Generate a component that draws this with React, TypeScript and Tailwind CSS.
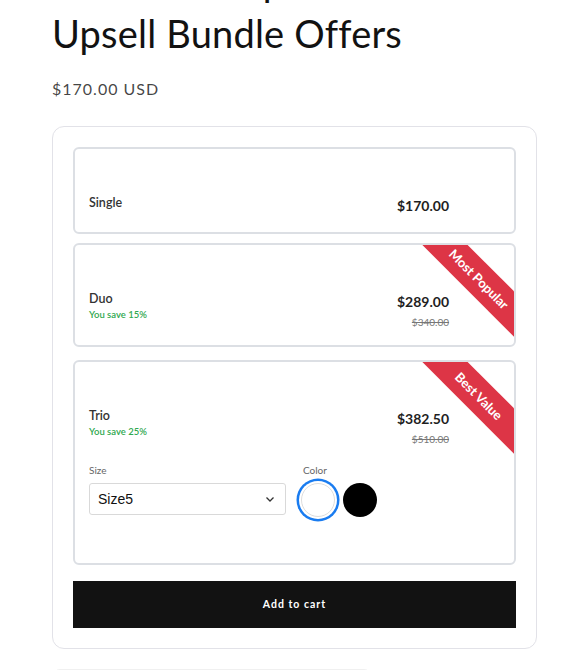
import React from "react";

function Ribbon({ text }: { text: string }) {
  return (
    <div className="pointer-events-none absolute right-[-40px] top-[18px] flex h-[32px] w-[150px] rotate-45 items-center justify-center bg-[#dd3546]">
      <span className="text-[13px] font-bold leading-none text-white">{text}</span>
    </div>
  );
}

function Offer({
  name,
  price,
  save,
  old,
  ribbon,
  className = "",
  children,
}: {
  name: string;
  price: string;
  save?: string;
  old?: string;
  ribbon?: string;
  className?: string;
  children?: React.ReactNode;
}) {
  return (
    <div
      className={`relative overflow-hidden rounded-[6px] border-2 border-[#dcdfe4] bg-white pl-[14px] pr-[65px] pt-[46px] ${className}`}
    >
      {ribbon && <Ribbon text={ribbon} />}
      <div className="flex items-start justify-between">
        <div className="flex flex-col">
          <span className="text-[12.5px] font-semibold leading-[16px] text-[#333]">{name}</span>
          {save && (
            <span className="text-[9.5px] font-semibold leading-[16px] text-[#2fa84f]">{save}</span>
          )}
        </div>
        <div className="flex flex-col items-end">
          <span className="text-[14px] font-bold leading-[22px] text-[#1f1f1f]">{price}</span>
          {old && (
            <span className="text-[10px] leading-[18px] text-[#777] line-through">{old}</span>
          )}
        </div>
      </div>
      {children}
    </div>
  );
}

export default function App() {
  return (
    <div
      className="h-[670px] overflow-hidden bg-white pl-[52px] text-[#121212]"
      style={{ fontFamily: "Lato, 'Noto Sans', sans-serif" }}
    >
      <div className="mt-[-45px] text-[38px] font-normal leading-[52px] tracking-[0.2px]">
        <div>Old Demo Up</div>
        <div>Upsell Bundle Offers</div>
      </div>
      <div className="mt-[20px] text-[16px] leading-[20px] tracking-[1px] text-[#121212]/80">
        $170.00 USD
      </div>
      <div className="mt-[27px] w-[485px] rounded-[12px] border border-[#e2e2e8] px-[20px] pb-[20px] pt-[20px]">
        <Offer name="Single" price="$170.00" className="h-[87px]" />
        <Offer
          name="Duo"
          price="$289.00"
          save="You save 15%"
          old="$340.00"
          ribbon="Most Popular"
          className="mt-[9px] h-[104px]"
        />
        <Offer
          name="Trio"
          price="$382.50"
          save="You save 25%"
          old="$510.00"
          ribbon="Best Value"
          className="mt-[13px] h-[205px]"
        >
          <div className="mt-[16px] flex items-start">
            <div className="flex flex-col">
              <span className="text-[10px] leading-[12px] text-[#666]">Size</span>
              <div
                className="mt-[7px] flex h-[32px] w-[197px] items-center justify-between rounded-[3px] border border-[#d9d9d9] bg-white pl-[8px] pr-[10px] text-[14px] text-[#111]"
                style={{ fontFamily: "'Liberation Sans', Arial, sans-serif" }}
              >
                <span>Size5</span>
                <svg width="10" height="10" viewBox="0 0 10 10" fill="none">
                  <path d="M1.5 3.5L5 7L8.5 3.5" stroke="#333" strokeWidth="1.3" />
                </svg>
              </div>
            </div>
            <div className="ml-[15px] flex flex-col">
              <span className="pl-[2px] text-[10px] leading-[12px] text-[#666]">Color</span>
              <div className="mt-[7px] flex items-center gap-[8px]">
                <div className="h-[34px] w-[34px] rounded-full border border-[#ddd] bg-white shadow-[0_0_0_2px_#fff,0_0_0_4.5px_#1a7cf0]" />
                <div className="h-[34px] w-[34px] rounded-full bg-black" />
              </div>
            </div>
          </div>
        </Offer>
        <button className="mt-[16px] flex h-[47px] w-full items-center justify-center bg-[#121212] text-[10.5px] font-bold tracking-[1px] text-white">
          Add to cart
        </button>
      </div>
      <div className="mt-[20px] h-[40px] w-[320px] rounded-t-[8px] border border-[#f0f0f0]" />
    </div>
  );
}
